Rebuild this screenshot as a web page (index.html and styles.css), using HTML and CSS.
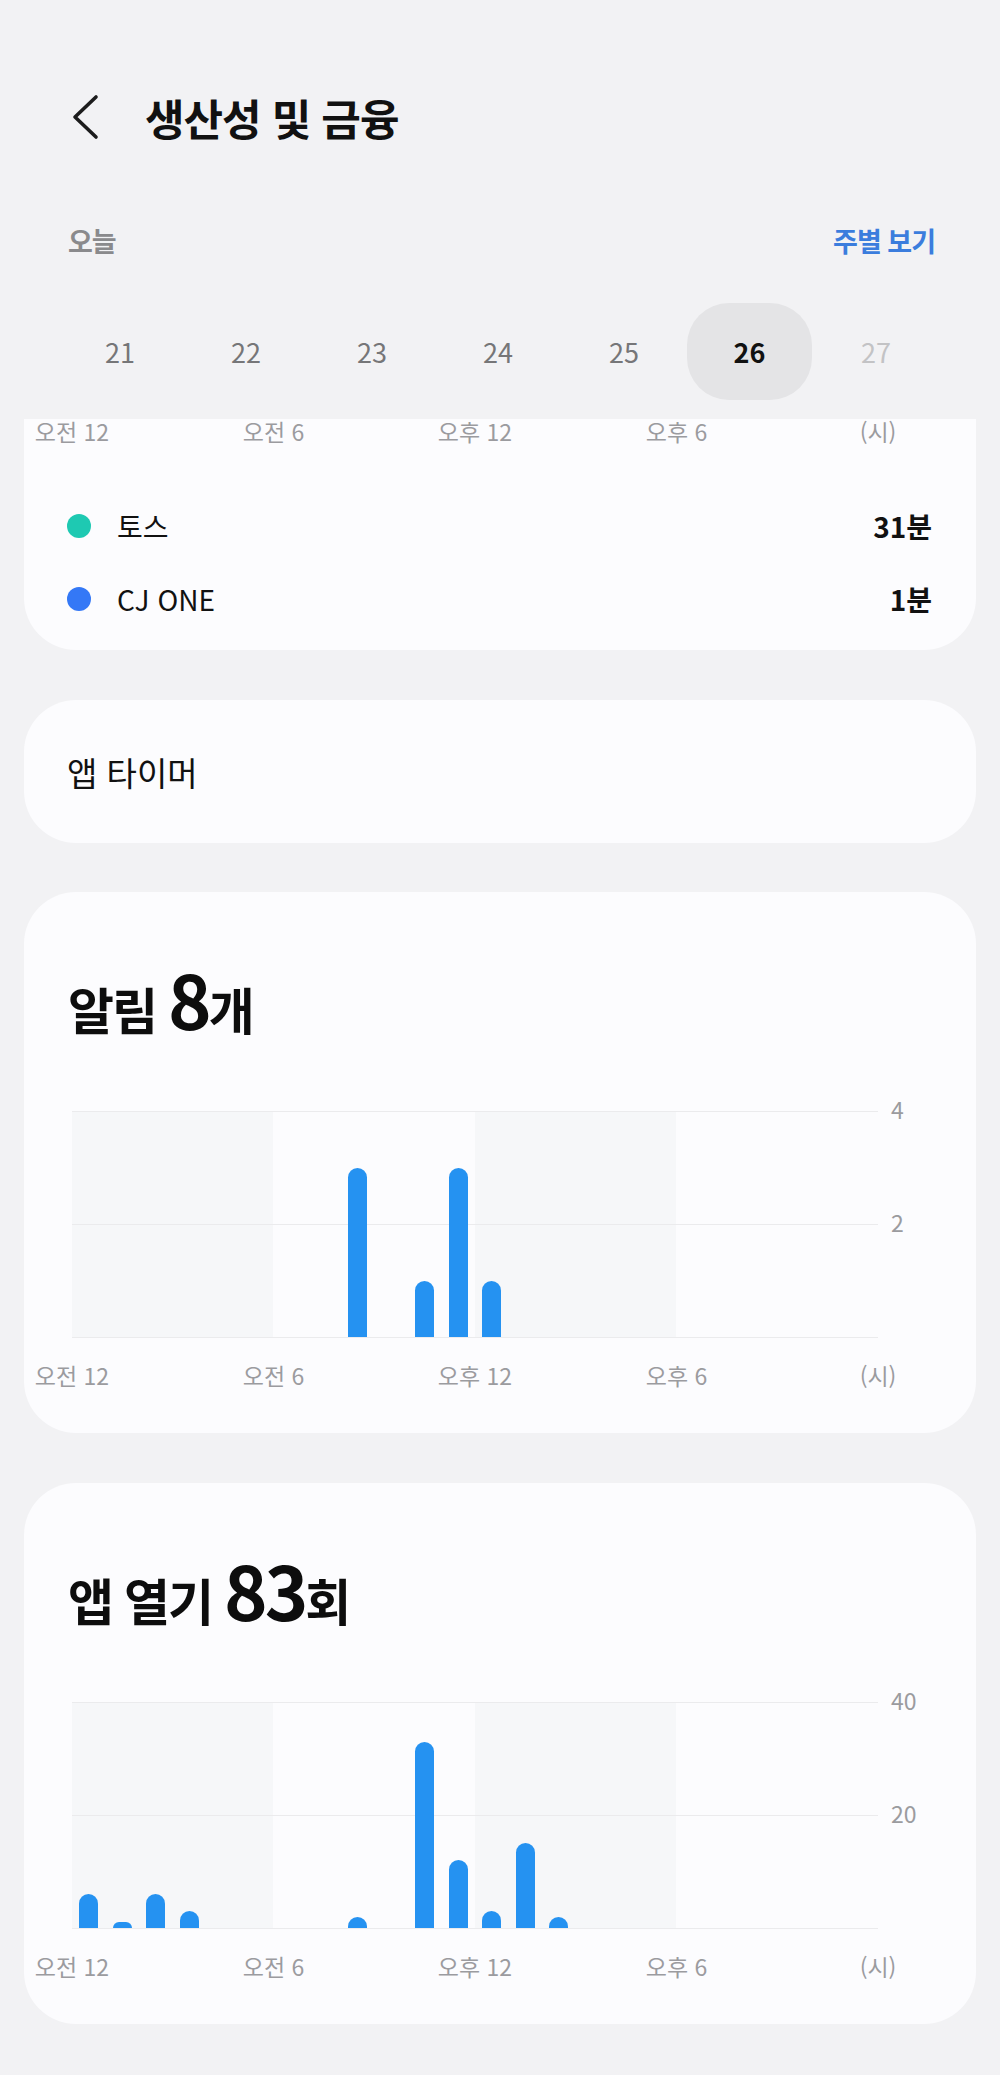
FILE: index.html
```html
<!DOCTYPE html>
<html lang="ko">
<head>
<meta charset="utf-8">
<title>생산성 및 금융</title>
<link rel="stylesheet" href="styles.css">
</head>
<body>
<div class="page">
  <header class="appbar">
    <svg class="back" viewBox="0 0 30 50" width="30" height="50" aria-hidden="true">
      <polyline points="26,5 5,25 26,45" fill="none" stroke="#1c1c1c" stroke-width="3.6" stroke-linecap="round" stroke-linejoin="round"/>
    </svg>
    <h1 class="title">생산성 및 금융</h1>
  </header>

  <div class="subrow">
    <span class="today">오늘</span>
    <span class="weekly">주별 보기</span>
  </div>

  <div class="days">
    <div class="day">21</div>
    <div class="day">22</div>
    <div class="day">23</div>
    <div class="day">24</div>
    <div class="day">25</div>
    <div class="day sel">26</div>
    <div class="day future">27</div>
  </div>

  <section class="card card-usage">
    <div class="xaxis">
      <span>오전 12</span><span>오전 6</span><span>오후 12</span><span>오후 6</span><span>(시)</span>
    </div>
    <div class="legend">
      <div class="legend-row">
        <span class="dot dot-teal"></span>
        <span class="name">토스</span>
        <span class="val">31분</span>
      </div>
      <div class="legend-row">
        <span class="dot dot-blue"></span>
        <span class="name">CJ ONE</span>
        <span class="val">1분</span>
      </div>
    </div>
  </section>

  <section class="card card-timer">
    <span class="timer-label">앱 타이머</span>
  </section>

  <section class="card card-stat">
    <h2 class="stat-title">알림 <span class="num">8</span>개</h2>
    <div class="chart">
      <div class="plot">
        <div class="bars">
          <i></i><i></i><i></i><i></i><i></i><i></i><i></i><i></i>
          <i class="bar" style="height:169.5px"></i>
          <i></i>
          <i class="bar" style="height:56.5px"></i>
          <i class="bar" style="height:169.5px"></i>
          <i class="bar" style="height:56.5px"></i>
          <i></i><i></i><i></i><i></i><i></i><i></i><i></i><i></i><i></i><i></i><i></i>
        </div>
      </div>
      <div class="yaxis"><span>4</span><span>2</span></div>
    </div>
    <div class="xaxis">
      <span>오전 12</span><span>오전 6</span><span>오후 12</span><span>오후 6</span><span>(시)</span>
    </div>
  </section>

  <section class="card card-stat">
    <h2 class="stat-title">앱 열기 <span class="num">83</span>회</h2>
    <div class="chart">
      <div class="plot">
        <div class="bars">
          <i class="bar" style="height:33.9px"></i>
          <i class="bar" style="height:5.7px"></i>
          <i class="bar" style="height:33.9px"></i>
          <i class="bar" style="height:17px"></i>
          <i></i><i></i><i></i><i></i>
          <i class="bar" style="height:11.3px"></i>
          <i></i>
          <i class="bar" style="height:186.5px"></i>
          <i class="bar" style="height:67.8px"></i>
          <i class="bar" style="height:17px"></i>
          <i class="bar" style="height:84.8px"></i>
          <i class="bar" style="height:11.3px"></i>
          <i></i><i></i><i></i><i></i><i></i><i></i><i></i><i></i><i></i>
        </div>
      </div>
      <div class="yaxis"><span>40</span><span>20</span></div>
    </div>
    <div class="xaxis">
      <span>오전 12</span><span>오전 6</span><span>오후 12</span><span>오후 6</span><span>(시)</span>
    </div>
  </section>
</div>
</body>
</html>
```

FILE: styles.css
```css
* { box-sizing: border-box; }

html, body {
  margin: 0;
  padding: 0;
  background: #f2f2f4;
}

body {
  font-family: "Noto Sans CJK KR", "Noto Sans", sans-serif;
  color: #111;
}

.page {
  width: 1000px;
  padding-bottom: 49px;
}

/* App bar */
.appbar {
  display: flex;
  align-items: center;
  height: 154px;
  padding-top: 80px;
  padding-left: 70px;
}

.back {
  display: block;
  flex: none;
}

.title {
  margin: 0 0 0 45px;
  font-size: 43px;
  font-weight: 700;
  letter-spacing: -1px;
  line-height: 1;
  color: #111;
}

/* Today / weekly row */
.subrow {
  display: flex;
  justify-content: space-between;
  align-items: center;
  height: 72px;
  margin-top: 50px;
  padding: 0 65px 0 68px;
}

.today {
  font-size: 27px;
  font-weight: 700;
  color: #8a8a8c;
  letter-spacing: -1px;
}

.weekly {
  font-size: 27px;
  font-weight: 700;
  color: #3b7ddd;
  letter-spacing: -1px;
}

/* Day selector */
.days {
  display: grid;
  grid-template-columns: repeat(7, 126px);
  height: 97px;
  margin-top: 27px;
  padding-left: 57px;
}

.day {
  display: flex;
  align-items: center;
  justify-content: center;
  font-size: 27px;
  color: #767678;
  border-radius: 42px;
}

.day.sel {
  width: 125px;
  background: #e4e4e6;
  color: #111;
  font-weight: 700;
}

.day.future {
  color: #c3c3c5;
}

/* Cards */
.card {
  margin: 50px 24px 0;
  background: #fcfcfe;
  border-radius: 52px;
}

.card-usage {
  margin-top: 19px;
  height: 231px;
  border-radius: 0 0 52px 52px;
}

.xaxis {
  display: grid;
  grid-template-columns: repeat(5, 201.5px);
  margin-left: -52.75px;
  font-size: 23px;
  line-height: 24px;
  color: #9b9b9f;
  text-align: center;
  white-space: nowrap;
}

.legend {
  margin-top: 46px;
}

.legend-row {
  display: flex;
  align-items: center;
  height: 73px;
  padding: 0 44px 0 43px;
  font-size: 28px;
}

.dot {
  width: 24px;
  height: 24px;
  border-radius: 50%;
  flex: none;
}

.dot-teal { background: #1ec9b2; }
.dot-blue { background: #3478f6; }

.name {
  margin-left: 26px;
  color: #111;
}

.val {
  margin-left: auto;
  font-weight: 700;
  color: #111;
}

.card-timer {
  display: flex;
  align-items: center;
  height: 143px;
  padding-left: 43px;
}

.timer-label {
  font-size: 33px;
  color: #111;
}

/* Stat cards */
.card-stat {
  margin-top: 49px;
  padding-top: 76px;
  padding-bottom: 46px;
}

.card-stat + .card-stat {
  margin-top: 50px;
}

.stat-title {
  margin: 0;
  padding-left: 44px;
  font-size: 50px;
  font-weight: 700;
  line-height: 60px;
  letter-spacing: -2px;
  color: #0d0d0d;
}

.stat-title .num {
  font-size: 74px;
  font-weight: 700;
  line-height: 60px;
  letter-spacing: -3px;
}

.chart {
  display: grid;
  grid-template-columns: 806px auto;
  align-items: start;
  margin-top: 73px;
  margin-left: 48px;
}

.plot {
  height: 227px;
  border-top: 1px solid #ebebed;
  border-bottom: 1px solid #ebebed;
  background:
    linear-gradient(#ebebed, #ebebed) 0 112px / 100% 1px no-repeat,
    linear-gradient(to right, #f6f7f9 0 25%, transparent 25% 50%, #f6f7f9 50% 75%, transparent 75% 100%);
}

.bars {
  display: grid;
  grid-template-columns: repeat(24, 1fr);
  align-items: end;
  height: 100%;
}

.bars i {
  display: block;
}

.bars .bar {
  justify-self: center;
  width: 19px;
  background: #2592f1;
  border-radius: 9.5px 9.5px 0 0;
}

.yaxis {
  display: flex;
  flex-direction: column;
  margin-top: -14px;
  margin-left: 13px;
  font-size: 23px;
  line-height: 24px;
  color: #9b9b9f;
}

.yaxis span {
  height: 113px;
}

.card-stat .xaxis {
  margin-top: 25px;
}
```
